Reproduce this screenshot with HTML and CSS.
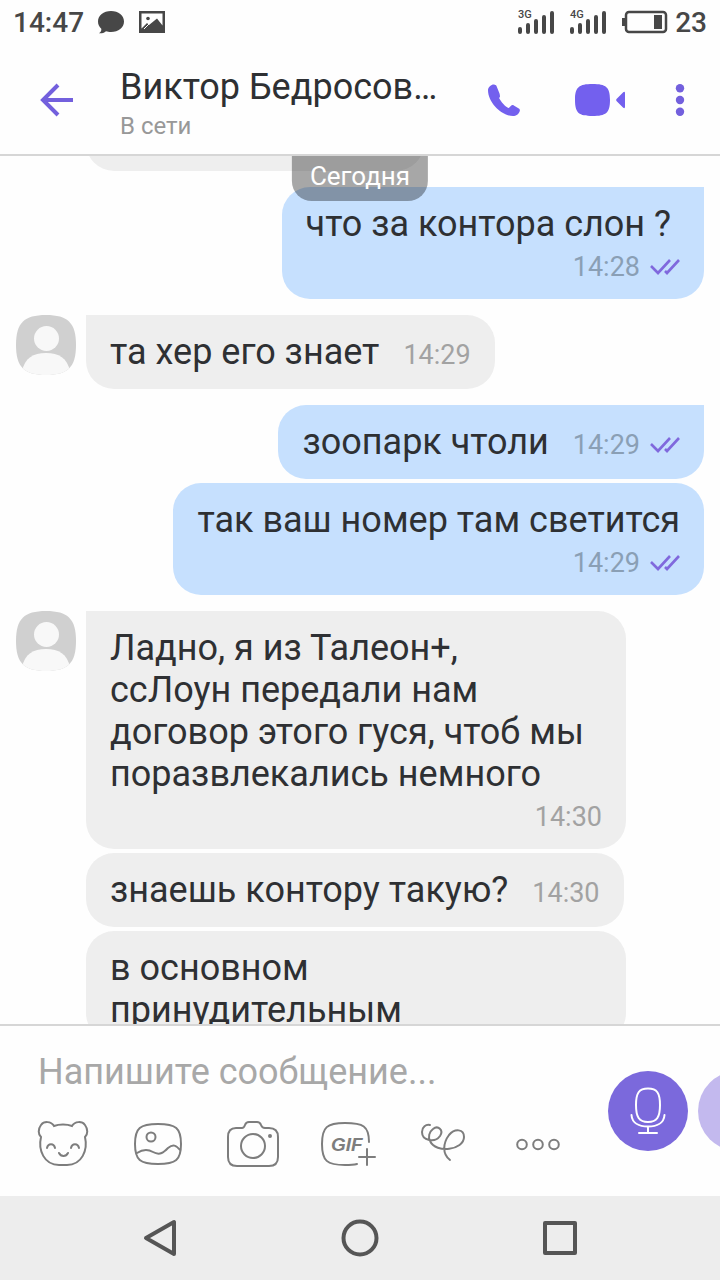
FILE: index.html
```html
<!DOCTYPE html>
<html lang="ru">
<head>
    <meta charset="utf-8">
    <meta name="viewport" content="width=device-width, initial-scale=1">
    <title>Виктор Бедросов…</title>
    <link rel="stylesheet" href="styles.css">
</head>
<body>
    <svg class="defs" aria-hidden="true">
        <symbol id="avatar" viewBox="0 0 60 60">
            <clipPath id="squircle"><path d="M30 0C52 0 60 8 60 30S52 60 30 60 0 52 0 30 8 0 30 0Z"/></clipPath>
            <g clip-path="url(#squircle)">
                <rect width="60" height="60" fill="#d0d0d0"/>
                <circle cx="30.5" cy="23.5" r="12.5" fill="#f8f8f8"/>
                <path d="M6 56C9 43 17 38 30 38S51 43 54 56V60H6Z" fill="#f8f8f8"/>
            </g>
        </symbol>
        <symbol id="seen" viewBox="0 0 30 18">
            <path d="M1 8l7 7L20 2M15 13l2 2L29 2" fill="none" stroke="#8069dd" stroke-width="2.6"/>
        </symbol>
    </svg>

    <div class="status">
        <span>14:47</span>
        <svg class="status-chat" width="28" height="24" viewBox="0 0 28 24"><path d="M14 1C21.5 1 27 5.500 27 11.500S21.500 22 14 22c-2 0-3.500-.3-5-.8C7 23 4.500 23.500 2 23.300 4 22 4.500 20.500 4.300 18.800 2.300 17 1 14.500 1 11.500 1 5.500 6.500 1 14 1Z" fill="#474747"/></svg>
        <svg class="status-image" width="26" height="22" viewBox="0 0 26 22"><path fill="#474747" fill-rule="evenodd" d="M0 0h26v22H0ZM2.500 2.500v15L8 12l2 2 8-6.500 5.500 7V2.500Z"/><circle cx="9" cy="7.5" r="1.8" fill="#474747"/><path d="M5 18l5-5" stroke="#fff"/></svg>
        <svg class="status-signal" width="37" height="24" viewBox="0 0 37 24">
            <text x="0" y="8">3G</text>
            <path d="M2 19v3M10 15v7M18 11v11M26 7v15M34 3v19"/>
        </svg>
        <svg class="status-signal" width="37" height="24" viewBox="0 0 37 24">
            <text x="0" y="8">4G</text>
            <path d="M2 19v3M10 15v7M18 11v11M26 7v15M34 3v19"/>
        </svg>
        <svg class="status-battery" width="46" height="24" viewBox="0 0 46 24"><rect x="4" y="2" width="40" height="20" rx="3" fill="none" stroke="#474747" stroke-width="2.5"/><path d="M0 8h4v8H0ZM32 5h8v14h-8Z" fill="#474747"/></svg>
        <span>23</span>
    </div>

    <header class="header">
        <button class="back" aria-label="Назад">
            <svg width="34" height="34" viewBox="0 0 34 34"><path d="M33 17H3M18 2L3 17l15 15" fill="none" stroke="#7360dd" stroke-width="4"/></svg>
        </button>
        <div class="contact">
            <h1>Виктор Бедросов…</h1>
            <p>В сети</p>
        </div>
        <button class="call" aria-label="Позвонить">
            <svg width="32" height="32" viewBox="0 0 32 32"><path d="M6 .5C4 0 0 3 0 6c0 13 14 26 25 26 3 0 6-2 6.800-5 .3-1-.2-2-1-2.500l-5-3c-1-.7-2.200-.4-3 .4l-2 2.100c-1 .4-6-3.500-9.500-9.500-.2-.7 0-1 .6-1.500C12 12 12 11 11.500 9.500L8.500 2C8 1 7 .6 6 .5Z" fill="#7360ee"/></svg>
        </button>
        <button class="call" aria-label="Видеозвонок">
            <svg width="50" height="32" viewBox="0 0 50 32"><path d="M17.500 0C31 0 35 3 35 16S31 32 17.500 32 0 29 0 16 4 0 17.500 0ZM48 8.500c1-1 2-.8 2 .5v14c0 1.300-1 1.500-2 .5L41.500 17q-.8-1 0-2Z" fill="#7360ee"/></svg>
        </button>
        <button class="more" aria-label="Меню">
            <svg width="10" height="32" viewBox="0 0 10 32"><g fill="#7360dd"><circle cx="5" cy="4.2" r="4.2"/><circle cx="5" cy="16" r="4.2"/><circle cx="5" cy="27.8" r="4.2"/></g></svg>
        </button>
    </header>

    <main class="chat">
        <div class="date">Сегодня</div>

        <div class="row row-cut"><div class="bubble"></div></div>

        <div class="row out first">
            <div class="bubble stacked"><p>что за контора слон ? </p><span class="time">14:28 <svg><use href="#seen"/></svg></span></div>
        </div>

        <div class="row first">
            <svg class="avatar"><use href="#avatar"/></svg>
            <div class="bubble"><p>та хер его знает</p><span class="time">14:29</span></div>
        </div>

        <div class="row out first">
            <div class="bubble"><p>зоопарк чтоли</p><span class="time">14:29 <svg><use href="#seen"/></svg></span></div>
        </div>
        <div class="row out">
            <div class="bubble stacked"><p>так ваш номер там светится</p><span class="time">14:29 <svg><use href="#seen"/></svg></span></div>
        </div>

        <div class="row first">
            <svg class="avatar"><use href="#avatar"/></svg>
            <div class="bubble stacked long"><p>Ладно, я из Талеон+,<br>ссЛоун передали нам<br>договор этого гуся, чтоб мы<br>поразвлекались немного</p><span class="time">14:30</span></div>
        </div>
        <div class="row">
            <div class="bubble"><p>знаешь контору такую?</p><span class="time">14:30</span></div>
        </div>
        <div class="row">
            <div class="bubble stacked long"><p>в основном<br>принудительным</p></div>
        </div>
    </main>

    <form class="composer">
        <div class="compose">
            <input type="text" aria-label="Сообщение" placeholder="Напишите сообщение...">
            <div class="tools">
                <button type="button" aria-label="Стикеры">
                    <svg width="52" height="48" viewBox="0 0 52 48"><path d="M17 6C14 1 7 1 4 5 1 9 1 14 4 17 1 30 7 45 22 45H30C45 45 51 30 48 17 51 14 51 9 48 5 45 1 38 1 35 6 30 4 22 4 17 6ZM10 28c1-5 7-5 8 0M34 28c1-5 7-5 8 0M22 33c2 4 7 4 9 0"/></svg>
                </button>
                <button type="button" aria-label="Галерея">
                    <svg width="52" height="48" viewBox="0 0 52 48"><path d="M26 4C44 4 49 8 49 24S44 44 26 44 3 40 3 24 8 4 26 4ZM5 33c6-4 11-4 16-1 7 4 11 0 15-4 5-4 8-3 12 2"/><circle cx="19" cy="17" r="4.5"/></svg>
                </button>
                <button type="button" aria-label="Камера">
                    <svg width="52" height="48" viewBox="0 0 52 48"><path d="M9 8H15Q17 8 18 5T22 2H30Q33 2 34 5T38 8H42Q51 8 51 17V37Q51 46 42 46H10Q1 46 1 37V17Q1 8 9 8Z"/><circle cx="26" cy="26" r="12"/><circle cx="43" cy="16" r="1"/></svg>
                </button>
                <button type="button" aria-label="GIF">
                    <svg width="56" height="48" viewBox="0 0 56 48"><path d="M37 44C33 45 29 45 25 45 7 45 2 41 2 24S7 3 25 3 49 6 49 22M47 29v16M39 37h16"/><text x="11" y="31">GIF</text></svg>
                </button>
                <button type="button" aria-label="Рисунок">
                    <svg width="52" height="48" viewBox="0 0 52 48"><path d="M13 5C9 4 5 7 5 12c0 9 13 11 18 4 4-6-2-11-7-7-4 3-5 8-3 12 6 13 34 9 34-4 0-8-9-9-15-2-6 8-7 19 1 25"/></svg>
                </button>
                <button type="button" aria-label="Ещё">
                    <svg width="44" height="48" viewBox="0 0 44 48"><circle cx="6" cy="24.5" r="4.8"/><circle cx="22" cy="24.5" r="4.8"/><circle cx="38" cy="24.5" r="4.8"/></svg>
                </button>
            </div>
        </div>
        <button type="button" class="mic" aria-label="Голосовое сообщение">
            <svg width="36" height="48" viewBox="0 0 36 48"><path d="M18 1.500C27 1.500 30 6 30 18S27 35 18 35 6 30 6 18 9 1.500 18 1.500ZM1.500 28C2 36 9 39.500 18 39.500S34 36 34.500 28M18 39.500V46M9 46H27"/></svg>
        </button>
        <button type="button" class="mic mic-next" aria-label="Видеосообщение"></button>
    </form>

    <nav class="navbar">
        <button aria-label="Назад"><svg width="40" height="40" viewBox="0 0 40 40"><path d="M34 4V36L6 20Z"/></svg></button>
        <button aria-label="Домой"><svg width="40" height="40" viewBox="0 0 40 40"><circle cx="20" cy="20" r="16.5"/></svg></button>
        <button aria-label="Недавние"><svg width="40" height="40" viewBox="0 0 40 40"><rect x="5" y="5" width="30" height="30"/></svg></button>
    </nav>
</body>
</html>
```
FILE: styles.css
```css
* { box-sizing: border-box; }

body {
    margin: 0;
    height: 100vh;
    display: flex;
    flex-direction: column;
    background: #fefefe;
    color: #2e3033;
    font-family: Roboto, "Liberation Sans", sans-serif;
    overflow: hidden;
}

h1, p { margin: 0; font-weight: normal; }

button {
    border: none;
    padding: 0;
    background: none;
    display: flex;
    align-items: center;
    justify-content: center;
    cursor: pointer;
}

svg { flex: none; }

.defs { position: absolute; width: 0; height: 0; }

/* status bar */
.status {
    height: 44px;
    padding: 0 13px;
    display: flex;
    align-items: center;
    color: #474747;
    font-size: 28px;
    font-weight: 500;
}

.status-chat { margin: 0 14px 0 13px; }
.status-image { margin-right: auto; }
.status-signal { margin-right: 15px; overflow: visible; }
.status-signal text { font-size: 11px; fill: #474747; }
.status-signal path { stroke: #474747; stroke-width: 4; stroke-linecap: round; }
.status-battery { margin-right: 7px; }

/* header */
.header {
    height: 112px;
    padding: 2px 8px 0 0;
    border-bottom: 2px solid #d6d6d6;
    display: flex;
    align-items: stretch;
}

.back { width: 120px; padding-right: 7px; }

.contact { flex: 1; min-width: 0; padding-top: 19px; }
.contact h1 {
    font-size: 36px;
    line-height: 44px;
    white-space: nowrap;
}
.contact p {
    color: #989898;
    font-size: 24px;
    line-height: 34px;
}

.call { width: 96px; }
.more { width: 64px; }

/* messages */
.chat {
    flex: 1;
    min-height: 0;
    position: relative;
    overflow: hidden;
    display: flex;
    flex-direction: column;
    gap: 4px;
}

.date {
    position: absolute;
    z-index: 1;
    top: 0;
    left: 50%;
    transform: translateX(-50%);
    padding: 0 18px 5px;
    border-radius: 0 0 20px 20px;
    background: rgba(0, 0, 0, .34);
    color: #fff;
    font-size: 26px;
    line-height: 40px;
}

.row {
    flex: none;
    display: flex;
    padding: 0 16px 0 86px;
}
.row.first { margin-top: 12px; }
.row.out { justify-content: flex-end; }
.row-cut { margin-top: -59px; }
.row-cut .bubble { width: 338px; }

.avatar {
    width: 60px;
    height: 60px;
    margin: 0 10px 0 -70px;
}

.bubble {
    min-height: 74px;
    max-width: 540px;
    padding: 16px 24px;
    border-radius: 28px;
    background: #eee;
    display: flex;
    align-items: baseline;
    gap: 24px;
    font-size: 36px;
    line-height: 42px;
}
.bubble p { white-space: pre-wrap; }
.first .bubble { border-top-left-radius: 0; }
.out .bubble { background: #c6e0fe; }
.out.first .bubble { border-top-left-radius: 28px; border-top-right-radius: 0; }

.stacked {
    padding-bottom: 10px;
    flex-direction: column;
    align-items: flex-start;
    gap: 0;
}
.long { width: 540px; }

.time {
    display: flex;
    align-items: center;
    gap: 10px;
    color: #a2a2a2;
    font-size: 27px;
    line-height: 32px;
}
.time svg { width: 30px; height: 18px; }
.out .time { color: #8a9fb5; }
.stacked .time { align-self: flex-end; line-height: 44px; }

/* composer */
.composer {
    padding: 16px 0;
    border-top: 2px solid #d6d6d6;
    display: flex;
    align-items: center;
    gap: 10px;
    overflow: hidden;
}

.compose { flex: 1; min-width: 0; }
.compose input {
    width: 100%;
    height: 60px;
    padding: 0 38px;
    border: none;
    outline: none;
    background: none;
    color: #2e3033;
    font: 36px Roboto, "Liberation Sans", sans-serif;
}
.compose input::placeholder { color: #a8a8a8; }

.tools {
    display: flex;
    padding: 18px 13px 12px 15px;
}
.tools button { flex: 1; }
.tools svg { fill: none; stroke: #7d7d7d; stroke-width: 2; stroke-linecap: round; }
.tools text {
    fill: #7d7d7d;
    stroke: none;
    font-size: 19px;
    font-weight: 700;
    font-style: italic;
}

.mic {
    flex: none;
    width: 80px;
    height: 80px;
    border-radius: 50%;
    background: #7b69dc;
}
.mic svg { fill: none; stroke: #fff; stroke-width: 2; stroke-linecap: round; }
.mic-next { margin-right: -58px; background: #c3b9ee; }

/* system buttons */
.navbar {
    height: 84px;
    padding: 0 60px;
    display: flex;
    background: #ededed;
}
.navbar button { flex: 1; }
.navbar svg { fill: none; stroke: #555; stroke-width: 4; stroke-linejoin: round; }
```
